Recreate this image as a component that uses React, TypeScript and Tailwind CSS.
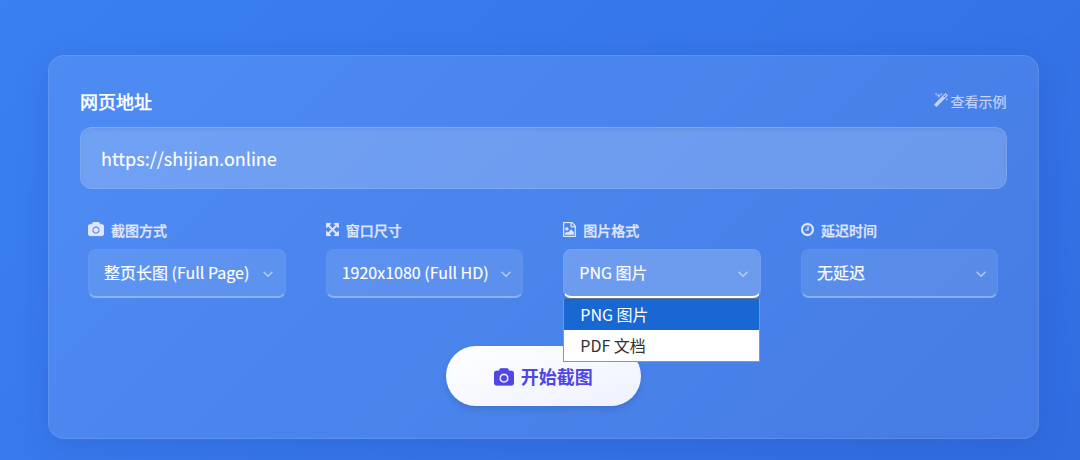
import React from 'react';

const paths = {
  camera:
    'M960 672q119 0 203.500 84.500t84.500 203.500-84.500 203.500-203.500 84.500-203.500-84.500-84.500-203.500 84.500-203.500 203.500-84.500zm704-416q106 0 181 75t75 181v896q0 106-75 181t-181 75h-1408q-106 0-181-75t-75-181v-896q0-106 75-181t181-75h224l51-136q19-49 69.500-84.500t103.500-35.500h512q53 0 103.500 35.500t69.500 84.500l51 136h224zm-704 1152q185 0 316.500-131.500t131.500-316.500-131.500-316.500-316.500-131.500-316.500 131.500-131.500 316.500 131.500 316.500 316.500 131.500z',
  arrows:
    'M1411 541l-355 355 355 355 144-144q29-31 70-14 39 17 39 59v448q0 26-19 45t-45 19h-448q-42 0-59-40-17-39 14-69l144-144-355-355-355 355 144 144q31 30 14 69-17 40-59 40h-448q-26 0-45-19t-19-45v-448q0-42 40-59 39-17 69 14l144 144 355-355-355-355-144 144q-19 19-45 19-12 0-24-5-40-17-40-59v-448q0-26 19-45t45-19h448q42 0 59 40 17 39-14 69l-144 144 355 355 355-355-144-144q-31-30-14-69 17-40 59-40h448q26 0 45 19t19 45v448q0 42-39 59-13 5-25 5-26 0-45-19z',
  image:
    'M1596 380q28 28 48 76t20 88v1152q0 40-28 68t-68 28h-1344q-40 0-68-28t-28-68v-1600q0-40 28-68t68-28h896q40 0 88 20t76 48zm-444-244v376h376q-10-29-22-41l-313-313q-12-12-41-22zm384 1528v-1024h-416q-40 0-68-28t-28-68v-416h-768v1536h1280zm-128-448v320h-1024v-192l192-192 128 128 384-384zm-832-192q-80 0-136-56t-56-136 56-136 136-56 136 56 56 136-56 136-136 56z',
  clock:
    'M1024 544v448q0 14-9 23t-23 9h-320q-14 0-23-9t-9-23v-64q0-14 9-23t23-9h224v-352q0-14 9-23t23-9h64q14 0 23 9t9 23zm416 352q0-148-73-273t-198-198-273-73-273 73-198 198-73 273 73 273 198 198 273 73 273-73 198-198 73-273zm224 0q0 209-103 385.500t-279.500 279.500-385.500 103-385.500-103-279.500-279.500-103-385.500 103-385.500 279.500-279.500 385.500-103 385.500 103 279.500 279.500 103 385.500z',
  magic:
    'M1254 581l293-293-107-107-293 293zm447-293q0 27-18 45l-1286 1286q-18 18-45 18t-45-18l-198-198q-18-18-18-45t18-45l1286-1286q18-18 45-18t45 18l198 198q18 18 18 45zm-1351-190l98 30-98 30-30 98-30-98-98-30 98-30 30-98zm350 162l196 60-196 60-60 196-60-196-196-60 196-60 60-196zm930 478l98 30-98 30-30 98-30-98-98-30 98-30 30-98zm-640-640l98 30-98 30-30 98-30-98-98-30 98-30 30-98z',
};

type IconName = keyof typeof paths;

function Icon({ name, viewBox, className }: { name: IconName; viewBox: string; className: string }) {
  return (
    <svg viewBox={viewBox} className={className} fill="currentColor" stroke="currentColor" strokeWidth="30" aria-hidden="true">
      <path d={paths[name]} />
    </svg>
  );
}

function Chevron() {
  return (
    <svg
      viewBox="0 0 12 12"
      className="mt-1 h-3 w-3 shrink-0 text-white/55"
      fill="none"
      stroke="currentColor"
      strokeWidth="1.4"
      strokeLinecap="round"
      strokeLinejoin="round"
      aria-hidden="true"
    >
      <path d="M2 4.200l4 4 4-4" />
    </svg>
  );
}

interface FieldProps {
  icon: IconName;
  viewBox: string;
  iconClass: string;
  label: string;
  value: string;
  options?: string[];
}

function Field({ icon, viewBox, iconClass, label, value, options }: FieldProps) {
  const open = Boolean(options);
  return (
    <div className="relative w-[197.5px]">
      <div className="flex h-[22px] items-center gap-[7px] text-sm font-medium text-[#e0e7ff] [-webkit-text-stroke:0.25px]">
        <Icon name={icon} viewBox={viewBox} className={iconClass} />
        <span>{label}</span>
      </div>
      <div
        className={`mt-2 flex h-[49px] items-center justify-between rounded-lg border border-b-2 pr-[10.5px] pb-[2px] pl-[15px] text-base text-white ${
          open ? 'border-white/5 border-b-white bg-white/20' : 'border-white/[0.03] border-b-white/30 bg-white/10'
        }`}
      >
        <span className="whitespace-nowrap [-webkit-text-stroke:0.15px]">{value}</span>
        <Chevron />
      </div>
      {options && (
        <div className="absolute top-[79px] left-0 z-10 w-[197px] border border-[#8f969f] border-t-[#5f7391] bg-white text-base">
          {options.map((option) => (
            <div
              key={option}
              className={`flex h-[31px] items-center pb-px pl-4 ${
                option === value ? 'bg-[#1967d2] text-white' : 'text-[#333333]'
              }`}
            >
              {option}
            </div>
          ))}
        </div>
      )}
    </div>
  );
}

export default function App() {
  return (
    <main className="h-[460px] w-[1080px] overflow-hidden bg-linear-[135deg] from-[#3a80f3] to-[#316de1] pt-[55px] pl-12 font-['Noto_Sans_CJK_SC',sans-serif]">
      <section className="h-[384px] w-[990.5px] rounded-2xl border border-white/10 bg-white/10 px-[31px] pt-[31px] shadow-[0_8px_32px_rgba(31,38,135,0.15)]">
        <div className="flex h-7 items-center justify-between">
          <h1 className="text-lg font-medium text-white [-webkit-text-stroke:0.25px]">网页地址</h1>
          <button className="flex items-center gap-[3px] text-sm text-[#c7d2fe] [-webkit-text-stroke:0.2px]">
            <Icon name="magic" viewBox="64 0 1664 1792" className="-mt-0.5 h-[15px] w-3.5" />
            <span>查看示例</span>
          </button>
        </div>
        <div className="mt-3 flex h-[62px] items-center rounded-xl border border-white/10 bg-white/20 px-5 text-lg text-white shadow-[inset_0_2px_4px_rgba(0,0,0,0.06)] [-webkit-text-stroke:0.1px]">
          https://shijian.online
        </div>
        <div className="mt-[30px] flex justify-between px-2">
          <Field icon="camera" viewBox="0 0 1920 1792" iconClass="-mt-px h-[15px] w-4" label="截图方式" value="整页长图 (Full Page)" />
          <Field icon="arrows" viewBox="128 0 1536 1792" iconClass="-mt-px h-[15px] w-[13px]" label="窗口尺寸" value="1920x1080 (Full HD)" />
          <Field icon="image" viewBox="128 0 1536 1792" iconClass="-mt-px h-[15px] w-[13px]" label="图片格式" value="PNG 图片" options={['PNG 图片', 'PDF 文档']} />
          <Field icon="clock" viewBox="128 0 1536 1792" iconClass="-mt-px h-[15px] w-[13px]" label="延迟时间" value="无延迟" />
        </div>
        <button className="mx-auto mt-[48px] flex h-[60px] w-[195px] items-center justify-center gap-[7px] rounded-full bg-linear-to-br from-white to-[#eef2ff] text-lg font-bold text-[#4f46e5] shadow-[0_4px_6px_rgba(0,0,0,0.1)]">
          <Icon name="camera" viewBox="0 0 1920 1792" className="mt-0.5 h-[19px] w-5" />
          <span>开始截图</span>
        </button>
      </section>
    </main>
  );
}
